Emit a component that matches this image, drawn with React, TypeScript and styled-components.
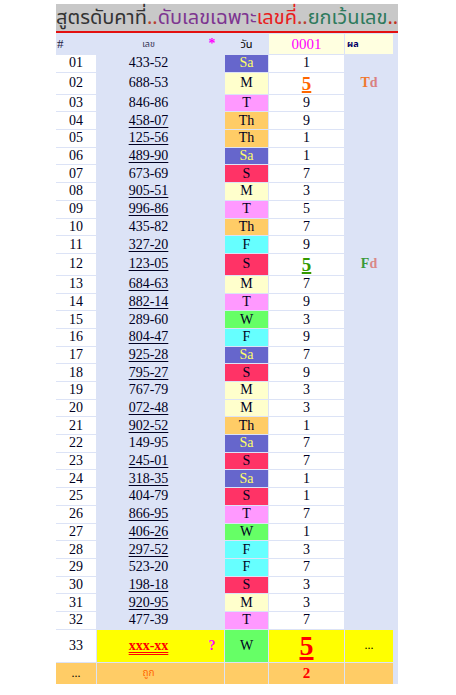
import React from "react";
import styled, { createGlobalStyle } from "styled-components";

const GlobalStyle = createGlobalStyle`
  html, body { margin: 0; padding: 0; background: #ffffff; }
  body { font-family: "Liberation Serif", "Times New Roman", serif; }
`;

const THAI = `Tahoma, "Noto Sans Thai", "Noto Sans", "DejaVu Sans", sans-serif`;

const Sheet = styled.div`
  width: 342px;
  margin: 4px 0 0 56px;
  background: #dce3f6;
  display: flex;
  flex-direction: column;
`;

const Title = styled.div`
  height: 27px;
  background: #c8c8c8;
  border-bottom: 2px solid #e31010;
  display: flex;
  align-items: center;
  white-space: nowrap;
  font-family: ${THAI};
  font-size: 20px;
  line-height: 1.2;
  color: #333333;
`;

const Tone = styled.span<{ $c: string }>`
  color: ${(p) => p.$c};
`;

const Rows = styled.div`
  display: flex;
  flex-direction: column;
  gap: 1px;
  padding: 1px 5px 0 0;
`;

const Row = styled.div<{ $h: number }>`
  display: grid;
  grid-template-columns: 40px 127px 43px 75px 48px;
  column-gap: 1px;
  height: ${(p) => p.$h}px;
`;

const Cell = styled.div<{ $bg?: string; $align?: string }>`
  background: ${(p) => p.$bg || "transparent"};
  display: flex;
  align-items: center;
  justify-content: ${(p) => p.$align || "center"};
  font-size: 14px;
  color: #000022;
`;

const NumCell = styled.div<{ $bg?: string }>`
  background: ${(p) => p.$bg || "transparent"};
  display: grid;
  grid-template-columns: 1fr 24px;
  align-items: center;
  justify-items: center;
  font-size: 14px;
  color: #000022;
`;

const Num = styled.span<{ $u?: boolean }>`
  text-decoration: ${(p) => (p.$u ? "underline" : "none")};
  text-underline-offset: 2px;
`;

const Mark = styled.span`
  color: #ff00ff;
  font-size: 14px;
  font-weight: bold;
`;

const HeadHash = styled.span`
  font-size: 13px;
  color: #222244;
  padding-left: 1px;
`;

const HeadSmall = styled.span`
  font-family: ${THAI};
  font-size: 9px;
  color: #333355;
`;

const HeadDay = styled.span`
  font-family: ${THAI};
  font-size: 11px;
  color: #000000;
`;

const HeadCode = styled.span`
  color: #ff00ff;
  font-size: 15px;
`;

const HeadResult = styled.span`
  font-family: ${THAI};
  font-size: 9px;
  font-weight: bold;
  color: #000066;
  padding-left: 2px;
`;

const DayText = styled.span<{ $c: string }>`
  color: ${(p) => p.$c};
  font-size: 14px;
`;

const Five = styled.span<{ $c: string; $size: number }>`
  color: ${(p) => p.$c};
  font-size: ${(p) => p.$size}px;
  font-weight: bold;
  text-decoration: underline;
  text-decoration-thickness: ${(p) => (p.$size > 20 ? 3 : 2)}px;
  text-underline-offset: ${(p) => (p.$size > 20 ? 2 : 1)}px;
  line-height: 1;
`;

const Tag = styled.span`
  font-size: 14px;
  font-weight: bold;
`;

const Guess = styled.span`
  color: #ff0000;
  font-weight: bold;
  font-size: 14px;
  text-decoration: underline double;
  text-underline-offset: 2px;
`;

const Small = styled.span<{ $c: string }>`
  font-family: ${THAI};
  font-size: 10px;
  color: ${(p) => p.$c};
`;

const Two = styled.span`
  color: #ff0000;
  font-weight: bold;
  font-size: 15px;
`;

const Dots = styled.span`
  font-size: 12px;
  color: #000000;
`;

const DAY: Record<string, { bg: string; fg: string }> = {
  Sa: { bg: "#6666cc", fg: "#ffff66" },
  M: { bg: "#ffffcc", fg: "#000022" },
  T: { bg: "#ff99ff", fg: "#000022" },
  Th: { bg: "#ffcc66", fg: "#000022" },
  S: { bg: "#ff3366", fg: "#000022" },
  W: { bg: "#66ff66", fg: "#000022" },
  F: { bg: "#66ffff", fg: "#000022" },
};

type R = { n: string; num: string; u: boolean; d: string; v: string };

const raw: [string, boolean, string, string][] = [
  ["433-52", false, "Sa", "1"],
  ["688-53", false, "M", "5"],
  ["846-86", false, "T", "9"],
  ["458-07", true, "Th", "9"],
  ["125-56", true, "Th", "1"],
  ["489-90", true, "Sa", "1"],
  ["673-69", false, "S", "7"],
  ["905-51", true, "M", "3"],
  ["996-86", true, "T", "5"],
  ["435-82", false, "Th", "7"],
  ["327-20", true, "F", "9"],
  ["123-05", true, "S", "5"],
  ["684-63", true, "M", "7"],
  ["882-14", true, "T", "9"],
  ["289-60", false, "W", "3"],
  ["804-47", true, "F", "9"],
  ["925-28", true, "Sa", "7"],
  ["795-27", true, "S", "9"],
  ["767-79", false, "M", "3"],
  ["072-48", true, "M", "3"],
  ["902-52", true, "Th", "1"],
  ["149-95", false, "Sa", "7"],
  ["245-01", true, "S", "7"],
  ["318-35", true, "Sa", "1"],
  ["404-79", false, "S", "1"],
  ["866-95", true, "T", "7"],
  ["406-26", true, "W", "1"],
  ["297-52", true, "F", "3"],
  ["523-20", false, "F", "7"],
  ["198-18", true, "S", "3"],
  ["920-95", true, "M", "3"],
  ["477-39", false, "T", "7"],
];

const rows: R[] = raw.map((r, i) => ({
  n: String(i + 1).padStart(2, "0"),
  num: r[0],
  u: r[1],
  d: r[2],
  v: r[3],
}));

function valueFor(i: number, v: string) {
  if (i === 1) return <Five $c="#ff6600" $size={19}>5</Five>;
  if (i === 11) return <Five $c="#339900" $size={19}>5</Five>;
  return v;
}

function resultFor(i: number) {
  if (i === 1)
    return (
      <Tag>
        <Tone $c="#f07830">T</Tone>
        <Tone $c="#d98080">d</Tone>
      </Tag>
    );
  if (i === 11)
    return (
      <Tag>
        <Tone $c="#3a9a3a">F</Tone>
        <Tone $c="#d98888">d</Tone>
      </Tag>
    );
  return null;
}

export default function App() {
  return (
    <>
      <GlobalStyle />
      <Sheet>
        <Title>
          <Tone $c="#333333">สูตรดับคาที่</Tone>
          <Tone $c="#b8402e">..</Tone>
          <Tone $c="#7d3590">ดับเลขเฉพาะ</Tone>
          <Tone $c="#e82020">เลขคี่</Tone>
          <Tone $c="#b8402e">..</Tone>
          <Tone $c="#2e7a5c">ยกเว้นเลข</Tone>
          <Tone $c="#c03020">..</Tone>
        </Title>
        <Rows>
          <Row $h={20}>
            <Cell $align="flex-start">
              <HeadHash>#</HeadHash>
            </Cell>
            <NumCell>
              <HeadSmall>เลข</HeadSmall>
              <Mark>*</Mark>
            </NumCell>
            <Cell>
              <HeadDay>วัน</HeadDay>
            </Cell>
            <Cell $bg="#ffffe0">
              <HeadCode>0001</HeadCode>
            </Cell>
            <Cell $bg="#ffffe0" $align="flex-start">
              <HeadResult>ผล</HeadResult>
            </Cell>
          </Row>
          {rows.map((r, i) => (
            <Row key={r.n} $h={i === 1 || i === 11 ? 21 : 16.7}>
              <Cell $bg="#ffffff">{r.n}</Cell>
              <NumCell>
                <Num $u={r.u}>{r.num}</Num>
                <span />
              </NumCell>
              <Cell $bg={DAY[r.d].bg}>
                <DayText $c={DAY[r.d].fg}>{r.d}</DayText>
              </Cell>
              <Cell $bg="#ffffff">{valueFor(i, r.v)}</Cell>
              <Cell>{resultFor(i)}</Cell>
            </Row>
          ))}
          <Row $h={32}>
            <Cell $bg="#ffffff">33</Cell>
            <NumCell $bg="#ffff00">
              <Guess>xxx-xx</Guess>
              <Mark>?</Mark>
            </NumCell>
            <Cell $bg={DAY.W.bg}>
              <DayText $c="#000022">W</DayText>
            </Cell>
            <Cell $bg="#ffff00">
              <Five $c="#ff0000" $size={28}>5</Five>
            </Cell>
            <Cell $bg="#ffff00">
              <Dots>...</Dots>
            </Cell>
          </Row>
          <Row $h={21}>
            <Cell $bg="#ffcc66">
              <Dots>...</Dots>
            </Cell>
            <NumCell $bg="#ffcc66">
              <Small $c="#ff6600">ถูก</Small>
              <span />
            </NumCell>
            <Cell $bg="#ffcc66" />
            <Cell $bg="#ffcc66">
              <Two>2</Two>
            </Cell>
            <Cell $bg="#ffcc66" />
          </Row>
        </Rows>
      </Sheet>
    </>
  );
}
